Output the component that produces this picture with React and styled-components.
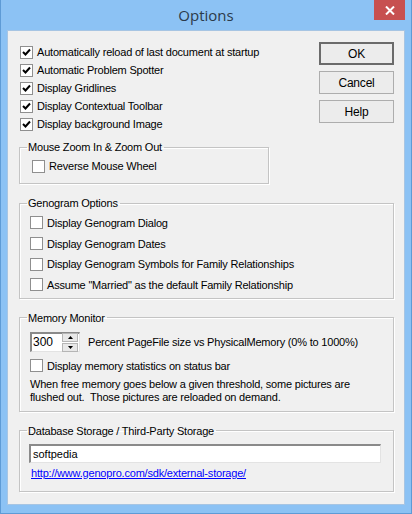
import React from 'react'
import styled, { createGlobalStyle } from 'styled-components'

const GlobalStyle = createGlobalStyle`
  html, body { margin:0; padding:0; background:#fff; }
  body { font-family: "Liberation Sans", Arial, sans-serif; }
`

const CheckMark = () => (
    <svg width="9" height="9" viewBox="0 0 9 9">
        <path d="M1 4 L3.5 6.5 L8 1.5" stroke="#000" strokeWidth="2" fill="none" />
    </svg>
)

const CheckBox = ({ checked, label }) => (
    <Row>
        <Box>{checked && <CheckMark />}</Box>
        <Label>{label}</Label>
    </Row>
)

const App = () => {
    return (
        <>
            <GlobalStyle />
            <Window>
                <TitleBar>
                    <span />
                    <Title>Options</Title>
                    <Close>
                        <svg width="10" height="9" viewBox="0 0 10 9">
                            <path d="M1 0.5 L9 8.5 M9 0.5 L1 8.5" stroke="#fff" strokeWidth="2" />
                        </svg>
                    </Close>
                </TitleBar>
                <Client>
                    <TopRow>
                        <LeftCol>
                            <Checks>
                                <CheckBox checked label="Automatically reload of last document at startup" />
                                <CheckBox checked label="Automatic Problem Spotter" />
                                <CheckBox checked label="Display Gridlines" />
                                <CheckBox checked label="Display Contextual Toolbar" />
                                <CheckBox checked label="Display background Image" />
                            </Checks>
                            <Group $top={7} $width={250}>
                                <Legend>Mouse Zoom In &amp; Zoom Out</Legend>
                                <GroupBody $pad="3px 0 8px 12px">
                                    <CheckBox label="Reverse Mouse Wheel" />
                                </GroupBody>
                            </Group>
                        </LeftCol>
                        <Buttons>
                            <Button $default>OK</Button>
                            <Button>Cancel</Button>
                            <Button>Help</Button>
                        </Buttons>
                    </TopRow>

                    <Group $top={12}>
                        <Legend>Genogram Options</Legend>
                        <GroupBody $pad="2.5px 0 2.5px 10px">
                            <TallRows>
                                <CheckBox label="Display Genogram Dialog" />
                                <CheckBox label="Display Genogram Dates" />
                                <CheckBox label="Display Genogram Symbols for Family Relationships" />
                                <CheckBox label={'Assume "Married" as the default Family Relationship'} />
                            </TallRows>
                        </GroupBody>
                    </Group>

                    <Group $top={12}>
                        <Legend>Memory Monitor</Legend>
                        <GroupBody $pad="7px 0 7px 10px">
                            <SpinRow>
                                <Spin>
                                    <SpinValue>300</SpinValue>
                                    <SpinButtons>
                                        <SpinButton>
                                            <svg width="5" height="3" viewBox="0 0 5 3"><path d="M2.5 0 L5 3 L0 3 Z" fill="#000" /></svg>
                                        </SpinButton>
                                        <SpinButton>
                                            <svg width="5" height="3" viewBox="0 0 5 3"><path d="M0 0 L5 0 L2.5 3 Z" fill="#000" /></svg>
                                        </SpinButton>
                                    </SpinButtons>
                                </Spin>
                                <Label>Percent PageFile size vs PhysicalMemory (0% to 1000%)</Label>
                            </SpinRow>
                            <Gap $h={5} />
                            <CheckBox label="Display memory statistics on status bar" />
                            <Note>
                                When free memory goes below a given threshold, some pictures are<br />
                                flushed out.&nbsp; Those pictures are reloaded on demand.
                            </Note>
                        </GroupBody>
                    </Group>

                    <Group $top={12}>
                        <Legend>Database Storage / Third-Party Storage</Legend>
                        <GroupBody $pad="6px 11px 11px 9px">
                            <TextInput>softpedia</TextInput>
                            <Link>http://www.genopro.com/sdk/external-storage/</Link>
                        </GroupBody>
                    </Group>
                </Client>
            </Window>
        </>
    )
}

export default App

const Window = styled.div`
width:412px;
height:514px;
box-sizing:border-box;
background:#8cc2f4;
border:1px solid #5e9bd6;
border-top:none;
padding:0 6px 8px 6px;
display:flex;
flex-direction:column;
`

const TitleBar = styled.div`
height:30px;
flex-shrink:0;
display:grid;
grid-template-columns:1fr auto 1fr;
align-items:start;
`

const Title = styled.div`
font-family:"Open Sans", "Noto Sans", sans-serif;
font-size:15px;
color:#2b3a4a;
line-height:30px;
`

const Close = styled.div`
justify-self:end;
width:31px;
height:20px;
background:#c75050;
display:flex;
align-items:center;
justify-content:center;
`

const Client = styled.div`
flex:1;
background:#f0f0f0;
border:1px solid #a7c5e3;
padding:11px 10px 0 11px;
display:flex;
flex-direction:column;
`

const TopRow = styled.div`
display:flex;
justify-content:space-between;
align-items:flex-start;
`

const LeftCol = styled.div`
display:flex;
flex-direction:column;
`

const Checks = styled.div`
display:flex;
flex-direction:column;
padding:1px 0 0 1px;
`

const Row = styled.div`
display:flex;
align-items:center;
height:18px;
gap:4px;
`

const TallRows = styled.div`
display:flex;
flex-direction:column;
& > div { height:20.7px; }
`

const Box = styled.span`
width:13px;
height:13px;
box-sizing:border-box;
border:1px solid #8f8f8f;
background:#fff;
display:flex;
align-items:center;
justify-content:center;
flex-shrink:0;
`

const Label = styled.span`
font-size:11px;
letter-spacing:-0.2px;
color:#000;
white-space:nowrap;
`

const Buttons = styled.div`
display:flex;
flex-direction:column;
gap:6px;
`

const Button = styled.div`
width:75px;
height:23px;
box-sizing:border-box;
background:#ececec;
border:${p => p.$default ? '2px solid #6b6b6b' : '1px solid #adadad'};
font-size:12px;
letter-spacing:-0.2px;
display:flex;
align-items:center;
justify-content:center;
color:#000;
`

const Group = styled.fieldset`
margin:${p => p.$top}px 0 0 0;
padding:0;
border:1px solid #c4c4c4;
box-shadow: inset 1px 1px 0 #fff, 1px 1px 0 #fff;
width:${p => p.$width ? p.$width + 'px' : 'auto'};
box-sizing:border-box;
min-width:0;
`

const Legend = styled.legend`
margin-left:7px;
padding:0 2px 0 1px;
font-size:11px;
letter-spacing:-0.2px;
line-height:14px;
color:#000;
`

const GroupBody = styled.div`
padding:${p => p.$pad};
`

const SpinRow = styled.div`
display:flex;
align-items:center;
gap:8px;
`

const Spin = styled.div`
width:50px;
height:20px;
box-sizing:border-box;
background:#fff;
border-top:2px solid #8a8a8a;
border-left:2px solid #8a8a8a;
border-right:1px solid #e3e3e3;
border-bottom:1px solid #e3e3e3;
display:flex;
align-items:center;
justify-content:space-between;
padding-left:1px;
`

const SpinValue = styled.span`
font-size:12px;
color:#000;
`

const SpinButtons = styled.div`
display:flex;
flex-direction:column;
gap:1px;
margin-right:1px;
`

const SpinButton = styled.div`
width:14px;
height:7px;
background:#e8e8e8;
border:1px solid #b5b5b5;
display:flex;
align-items:center;
justify-content:center;
`

const Gap = styled.div`
height:${p => p.$h}px;
`

const Note = styled.div`
margin-top:3px;
font-size:11px;
letter-spacing:-0.2px;
line-height:13px;
color:#000;
`

const TextInput = styled.div`
width:352px;
height:19px;
box-sizing:border-box;
background:#fff;
border-top:2px solid #8a8a8a;
border-left:2px solid #8a8a8a;
border-right:1px solid #e3e3e3;
border-bottom:1px solid #e3e3e3;
font-size:11px;
padding-left:2px;
display:flex;
align-items:center;
`

const Link = styled.a`
display:block;
margin-top:4px;
margin-left:2px;
font-size:11px;
letter-spacing:-0.2px;
line-height:13px;
color:#0000ff;
text-decoration:underline;
`
